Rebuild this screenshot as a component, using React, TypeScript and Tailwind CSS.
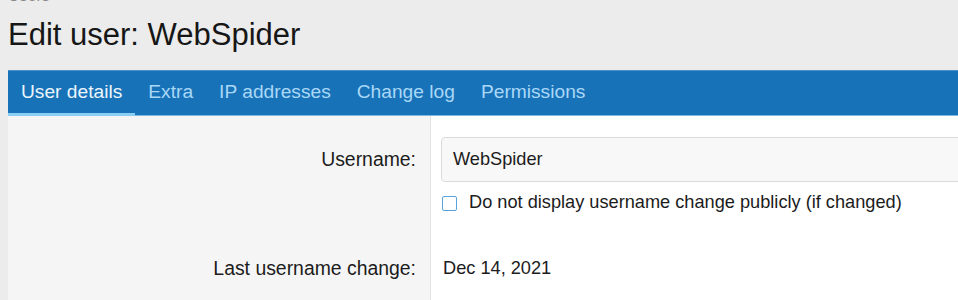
const tabs = ['User details', 'Extra', 'IP addresses', 'Change log', 'Permissions'];

// Tab bar along the top of the edit block
function TabBar() {
  return (
    <div className="flex h-[46px] bg-[#1872b7] border-t border-[#4a92cc] border-b border-b-[#7fb9e3]">
      {tabs.map((tab, i) => (
        <div
          key={tab}
          className={`flex items-center px-[13px] text-[19.2px] border-b-[3px] -mb-px ${
            i === 0 ? 'text-[#eaf5fd] border-[#8ccdf3]' : 'text-[#a9d8f7] border-transparent'
          }`}
        >
          {tab}
        </div>
      ))}
    </div>
  );
}

export default function App() {
  return (
    <div
      className="h-[300px] overflow-hidden bg-[#ececec] text-[#1c1c1c]"
      style={{ fontFamily: '"Liberation Sans", Arial, sans-serif' }}
    >
      <div className="px-2">
        <p className="-mt-[12px] text-[16px] leading-4 text-[#8a8a8a]">Users</p>
        <h1 className="mt-[16px] text-[31px] leading-[30px] text-[#161616]">Edit user: WebSpider</h1>
      </div>

      <div className="ml-2 mt-[20px]">
        <TabBar />

        {/* Username row */}
        <div className="flex">
          <div className="w-[423px] shrink-0 bg-[#f5f5f5] border-r border-[#e2e2e2] pt-[21px] pb-[21px] pr-[14px]">
            <div className="flex h-[45px] items-center justify-end text-[19.4px]">Username:</div>
          </div>
          <div className="min-w-0 flex-1 bg-white pl-[10px] pt-[21px] pb-[21px]">
            <div className="flex h-[45px] w-[560px] items-center rounded-[4px] border border-[#dadada] bg-[#f8f8f8] pl-[11px] text-[18.2px]">
              WebSpider
            </div>
            <label className="mt-[10px] flex h-[22px] items-center gap-[12px] pl-[1px] text-[18.2px] whitespace-nowrap">
              <span className="h-[15px] w-[15px] shrink-0 rounded-[2px] border-[1.5px] border-[#58a3da] bg-white" />
              Do not display username change publicly (if changed)
            </label>
          </div>
        </div>

        {/* Last username change row */}
        <div className="flex">
          <div className="w-[423px] shrink-0 bg-[#f5f5f5] border-r border-[#e2e2e2] pt-[21px] pb-[30px] pr-[14px]">
            <div className="text-right text-[19.4px] leading-6">Last username change:</div>
          </div>
          <div className="min-w-0 flex-1 bg-white pl-[12px] pt-[21px] pb-[30px]">
            <div className="text-[18.2px] leading-6">Dec 14, 2021</div>
          </div>
        </div>
      </div>
    </div>
  );
}
